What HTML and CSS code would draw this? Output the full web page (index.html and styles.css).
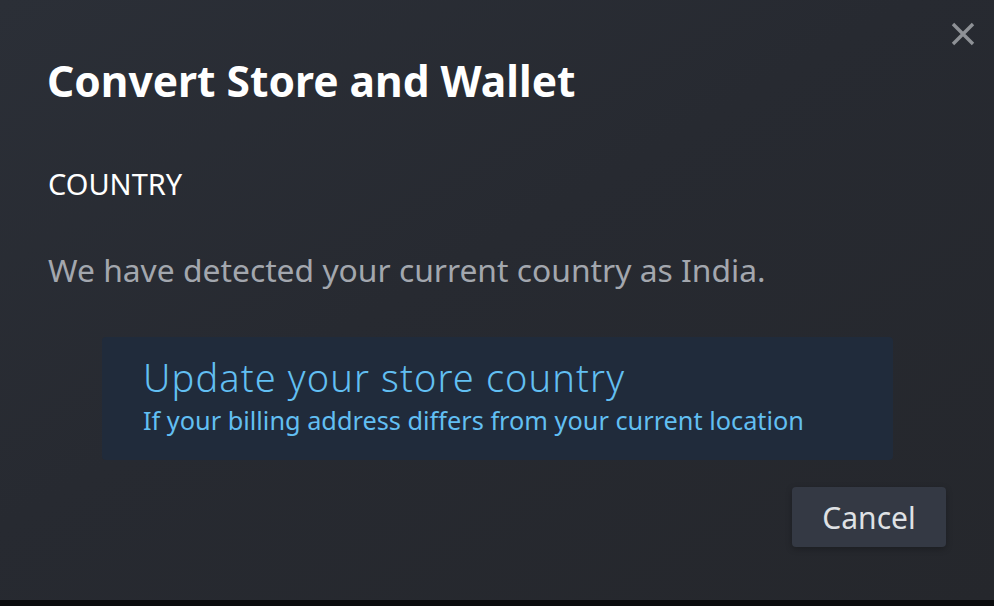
FILE: index.html
```html
<!DOCTYPE html>
<html>
<head>
<meta charset="utf-8">
<link rel="stylesheet" href="styles.css">
</head>
<body>
<div class="dialog">
  <button class="close" aria-label="Close">
    <svg width="26" height="26" viewBox="0 0 26 26"><path d="M3 3 L23 23 M23 3 L3 23" stroke="#8e9196" stroke-width="3.4" stroke-linecap="butt"/></svg>
  </button>
  <h1 class="title">Convert Store and Wallet</h1>
  <div class="label">COUNTRY</div>
  <p class="desc">We have detected your current country as India.</p>
  <div class="option">
    <div class="opt-title">Update your store country</div>
    <div class="opt-sub">If your billing address differs from your current location</div>
  </div>
  <div class="actions">
    <button class="cancel">Cancel</button>
  </div>
</div>
<div class="bottom"></div>
</body>
</html>
```
FILE: styles.css
```css
html, body {
  margin: 0;
  padding: 0;
  width: 994px;
  height: 606px;
  overflow: hidden;
  background: #0a0b0d;
}
.dialog {
  position: relative;
  box-sizing: border-box;
  width: 994px;
  height: 600px;
  padding: 52px 48px 0 47px;
  background: linear-gradient(150deg, #2b2f37 0%, #272a31 45%, #25272c 100%);
  font-family: "Noto Sans", "Open Sans", sans-serif;
  display: flex;
  flex-direction: column;
}
.close {
  position: absolute;
  top: 21px;
  right: 18px;
  background: none;
  border: 0;
  padding: 0;
  width: 26px;
  height: 26px;
}
.title {
  margin: 0;
  font-size: 42.5px;
  font-weight: 700;
  color: #ffffff;
  line-height: 58px;
}
.label {
  margin-top: 56px;
  padding-left: 1px;
  font-size: 29px;
  color: #ffffff;
  line-height: 36px;
}
.desc {
  margin: 48px 0 0 1px;
  font-size: 31.8px;
  color: #a3a7ae;
  line-height: 40px;
}
.option {
  margin: 47px 53px 0 55px;
  background: #202b3b;
  border-radius: 4px;
  padding: 14px 30px 10px 41px;
  height: 123px;
  box-sizing: border-box;
}
.opt-title {
  font-size: 38px;
  font-weight: 300;
  color: #62bff2;
  line-height: 52px;
  letter-spacing: 1.1px;
}
.opt-sub {
  font-size: 25.3px;
  color: #62bff2;
  line-height: 35px;
}
.actions {
  display: flex;
  justify-content: flex-end;
  margin-top: 27px;
}
.cancel {
  width: 154px;
  height: 60px;
  background: #343944;
  border: 0;
  border-radius: 4px;
  color: #dfe1e4;
  font-family: "Noto Sans", "Open Sans", sans-serif;
  font-size: 30px;
  box-shadow: 0 2px 6px rgba(0,0,0,0.25);
}
.bottom {
  height: 6px;
  background: #0a0b0d;
}
```
